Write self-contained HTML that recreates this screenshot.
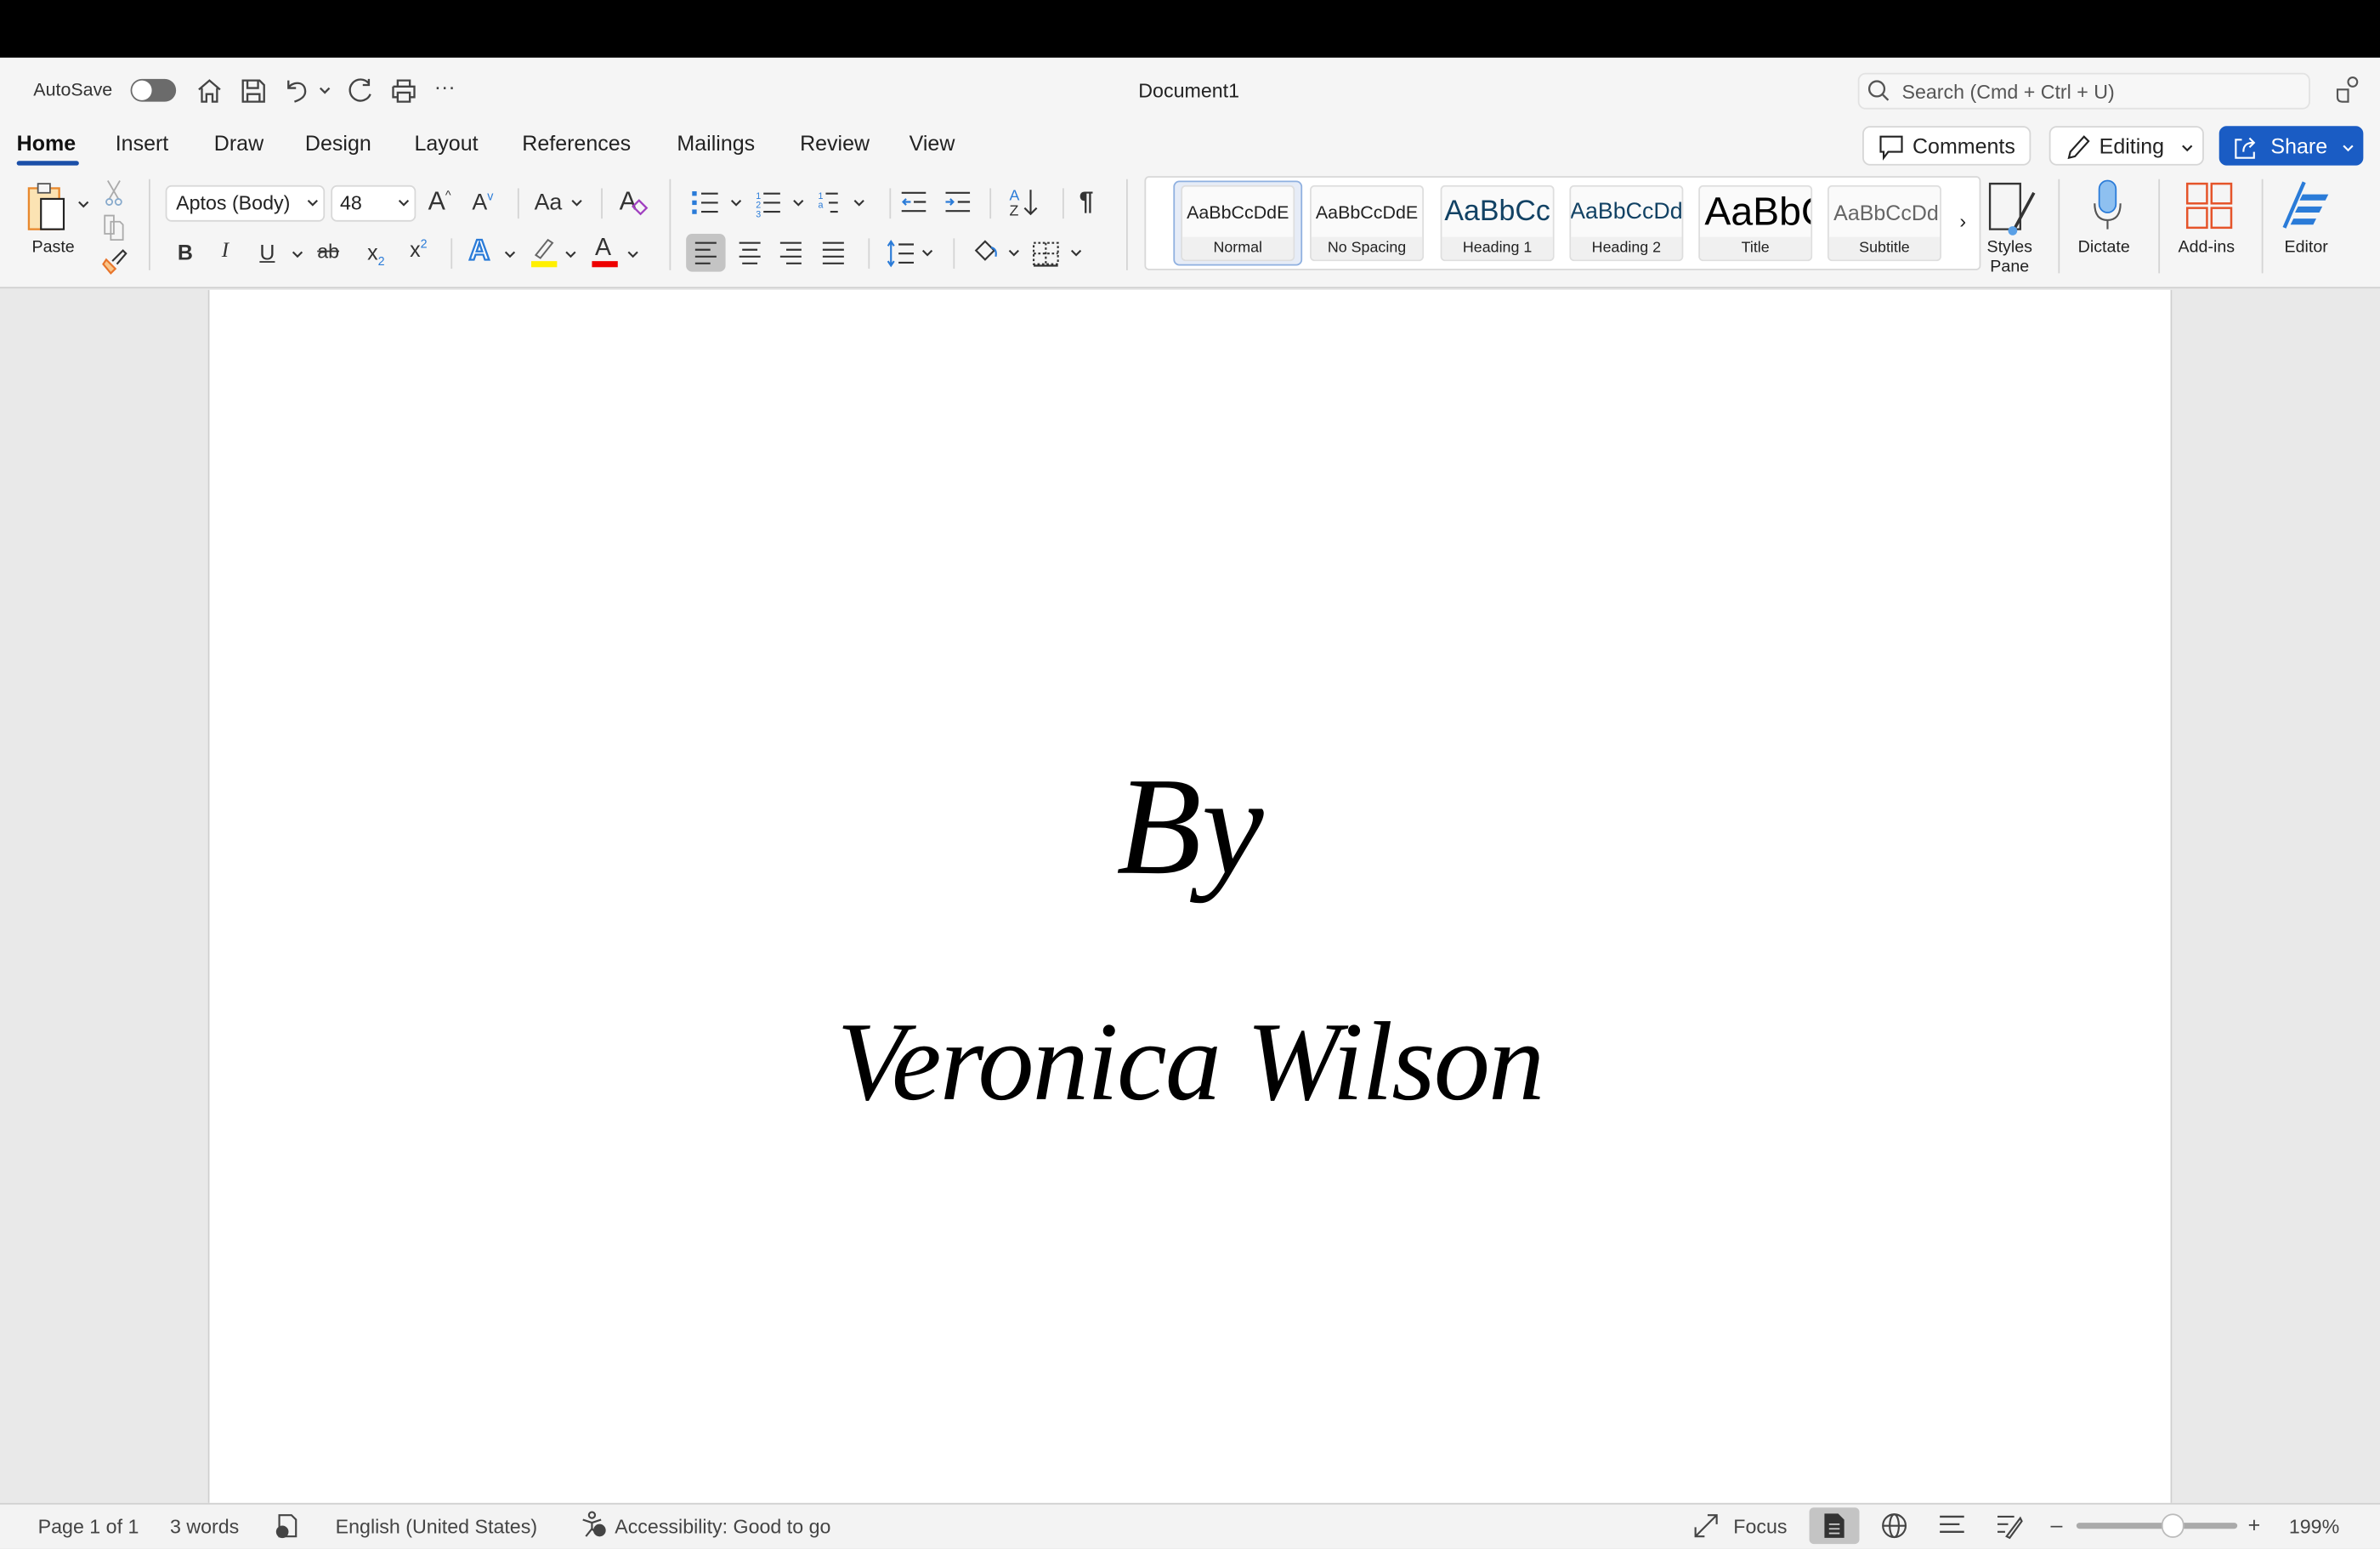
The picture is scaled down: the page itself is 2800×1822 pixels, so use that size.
<!DOCTYPE html>
<html><head><meta charset="utf-8">
<style>
*{margin:0;padding:0;box-sizing:border-box}
html,body{width:2800px;height:1822px;overflow:hidden;background:#e9e9e9}
#s{position:absolute;left:0;top:0;width:1568px;height:1020px;transform:scale(1.785714);transform-origin:0 0;font-family:"Liberation Sans",sans-serif;color:#222;background:#e9e9e9}
.a{position:absolute}
.t{font-size:14px;color:#222;white-space:nowrap}
.sep{position:absolute;width:1px;background:#d4d4d4}
svg{position:absolute;overflow:visible}
.btn{position:absolute;background:#fff;border:1px solid #d6d6d6;border-radius:5px;font-size:14px;display:flex;align-items:center}
.sty{position:absolute;top:122px;width:75px;height:50px;background:#fafafa;border:1px solid #dedede;border-radius:3px;overflow:hidden}
.sty .p{height:33px;display:flex;align-items:center;justify-content:center;white-space:nowrap;overflow:hidden}
.sty .l{height:17px;background:#f0f0f0;font-size:10px;text-align:center;line-height:16px;color:#222}
</style></head><body><div id="s">
<div class="a" style="left:0;top:0;width:1568px;height:38px;background:#000"></div>
<div class="a" style="left:0;top:38px;width:1568px;height:152px;background:#f5f5f5;border-bottom:1px solid #cfcfcf"></div>
<div class="a t" style="left:22px;top:52px;font-size:12px;color:#333">AutoSave</div>
<div class="a" style="left:86px;top:52px;width:30px;height:15px;border-radius:8px;background:#6b6b6b"></div>
<div class="a" style="left:87px;top:53px;width:13px;height:13px;border-radius:7px;background:#fff"></div>
<svg style="left:128px;top:50px" width="20" height="20" fill="none" stroke="#444" stroke-width="1.3"><path d="M3 9 L10 3 L17 9 M5 8 V17 H8 V12 H12 V17 H15 V8"/></svg>
<svg style="left:157px;top:50px" width="20" height="20" fill="none" stroke="#444" stroke-width="1.3"><path d="M3 3 H14 L17 6 V17 H3 Z M6 3 V8 H13 V3 M6 17 V12 H14 V17"/></svg>
<svg style="left:186px;top:50px" width="20" height="20" fill="none" stroke="#444" stroke-width="1.3"><path d="M4 3 V8 H9 M4 8 C6 4 14 3 15 9 C16 14 11 16 8 17"/></svg>
<svg style="left:210px;top:56px" width="10" height="8" fill="none" stroke="#444" stroke-width="1.3"><path d="M1 2 L4 5 L7 2"/></svg>
<svg style="left:228px;top:50px" width="20" height="20" fill="none" stroke="#444" stroke-width="1.3"><path d="M15 5 A7 7 0 1 0 16 12 M15 2 V6 H11"/></svg>
<svg style="left:256px;top:50px" width="20" height="20" fill="none" stroke="#444" stroke-width="1.3"><path d="M6 7 V3 H14 V7 M3 7 H17 V14 H14 M6 14 H3 V7 M6 11 H14 V17 H6 Z"/></svg>
<div class="a t" style="left:286px;top:49px;font-size:14px;color:#444">···</div>
<div class="a t" style="left:750px;top:52px;font-size:13px">Document1</div>
<div class="a" style="left:1224px;top:48px;width:298px;height:24px;border:1px solid #e2e2e2;border-radius:5px;background:#f7f7f7"></div>
<svg style="left:1230px;top:52px" width="16" height="16" fill="none" stroke="#555" stroke-width="1.3"><circle cx="6.5" cy="6.5" r="5"/><path d="M10 10 L14 14"/></svg>
<div class="a t" style="left:1253px;top:53px;font-size:13px;color:#555">Search (Cmd + Ctrl + U)</div>
<svg style="left:1538px;top:50px" width="18" height="18" fill="none" stroke="#555" stroke-width="1.2"><circle cx="12" cy="4" r="3"/><path d="M2 9 H9 V17 H5 Q2 17 2 14 Z"/></svg>
<div class="a t" style="left:11px;top:86px;font-size:14px;font-weight:bold;color:#111">Home</div>
<div class="a" style="left:11px;top:106px;width:41px;height:3px;border-radius:2px;background:#1b4fa8"></div>
<div class="a t" style="left:76px;top:86px">Insert</div>
<div class="a t" style="left:141px;top:86px">Draw</div>
<div class="a t" style="left:201px;top:86px">Design</div>
<div class="a t" style="left:273px;top:86px">Layout</div>
<div class="a t" style="left:344px;top:86px">References</div>
<div class="a t" style="left:446px;top:86px">Mailings</div>
<div class="a t" style="left:527px;top:86px">Review</div>
<div class="a t" style="left:599px;top:86px">View</div>
<div class="btn" style="left:1227px;top:83px;width:111px;height:26px"><svg style="left:9px;top:5px" width="18" height="16" fill="none" stroke="#222" stroke-width="1.2"><path d="M2 1 H16 V11 H7 L4 15 V11 H2 Z"/></svg><span style="margin-left:32px">Comments</span></div>
<div class="btn" style="left:1350px;top:83px;width:102px;height:26px"><svg style="left:9px;top:5px" width="18" height="16" fill="none" stroke="#222" stroke-width="1.2"><path d="M3 15 L4 11 L13 1 L16 4 L7 14 Z"/></svg><span style="margin-left:32px">Editing</span><svg style="left:86px;top:11px" width="10" height="8" fill="none" stroke="#222" stroke-width="1.2"><path d="M1 1 L4 4 L7 1"/></svg></div>
<div class="btn" style="left:1462px;top:83px;width:95px;height:26px;background:#1a5cc4;border-color:#1a5cc4;color:#fff"><svg style="left:8px;top:5px" width="18" height="16" fill="none" stroke="#fff" stroke-width="1.2"><path d="M6 3 H2 V15 H14 V11 M7 11 C7 6 10 5 14 5 M11 2 L14 5 L11 8"/></svg><span style="margin-left:33px">Share</span><svg style="left:80px;top:11px" width="10" height="8" fill="none" stroke="#fff" stroke-width="1.2"><path d="M1 1 L4 4 L7 1"/></svg></div>
<svg style="left:16px;top:120px" width="36" height="36"><rect x="3" y="4" width="20" height="27" fill="#fbe3b3" stroke="#e8892e" stroke-width="1.3"/><rect x="9" y="1" width="8" height="6" fill="#f5f5f5" stroke="#555" stroke-width="1"/><rect x="11" y="11" width="15" height="20" fill="#fff" stroke="#222" stroke-width="1.2"/></svg>
<svg style="left:51px;top:132px" width="8" height="6" fill="none" stroke="#333" stroke-width="1.2"><path d="M1 1 L4 4 L7 1"/></svg>
<div class="a t" style="left:21px;top:157px;font-size:11px">Paste</div>
<svg style="left:68px;top:118px" width="14" height="18" fill="none" stroke="#9db" stroke-width="1"><path d="M3 1 L10 13 M11 1 L4 13" stroke="#aaa"/><circle cx="4" cy="15" r="2" stroke="#8ac"/><circle cx="10" cy="15" r="2" stroke="#8ac"/></svg>
<svg style="left:67px;top:141px" width="16" height="18" fill="none" stroke="#aaa" stroke-width="1"><path d="M2 1 H8 V13 H2 Z M6 5 H12 L14 7 V17 H6 Z"/></svg>
<svg style="left:67px;top:163px" width="18" height="18" fill="none" stroke-width="1.2"><path d="M3 8 L9 14 L6 17 L1 11 Z" fill="#f9c58a" stroke="#e8742a"/><path d="M7 9 L14 2 L16 4 L10 11" stroke="#333"/></svg>
<div class="sep" style="left:98px;top:118px;height:60px"></div>
<div class="a" style="left:109px;top:122px;width:105px;height:24px;background:#fff;border:1px solid #d8d8d8;border-radius:4px"></div>
<div class="a t" style="left:116px;top:126px;font-size:13px">Aptos (Body)</div>
<svg style="left:202px;top:131px" width="8" height="6" fill="none" stroke="#333" stroke-width="1.2"><path d="M1 1 L4 4 L7 1"/></svg>
<div class="a" style="left:218px;top:122px;width:56px;height:24px;background:#fff;border:1px solid #d8d8d8;border-radius:4px"></div>
<div class="a t" style="left:224px;top:126px;font-size:13px">48</div>
<svg style="left:262px;top:131px" width="8" height="6" fill="none" stroke="#333" stroke-width="1.2"><path d="M1 1 L4 4 L7 1"/></svg>
<div class="a t" style="left:282px;top:123px;font-size:17px;color:#333">A<sup style="font-size:8px">^</sup></div>
<div class="a t" style="left:311px;top:125px;font-size:15px;color:#333">A<sup style="font-size:8px;color:#2a7bd8">v</sup></div>
<div class="sep" style="left:341px;top:124px;height:20px"></div>
<div class="a t" style="left:352px;top:125px;font-size:15px;color:#333">Aa</div>
<svg style="left:376px;top:131px" width="8" height="6" fill="none" stroke="#333" stroke-width="1.2"><path d="M1 1 L4 4 L7 1"/></svg>
<div class="sep" style="left:396px;top:124px;height:20px"></div>
<div class="a t" style="left:408px;top:123px;font-size:17px;color:#333">A</div>
<svg style="left:416px;top:131px" width="12" height="12" fill="none" stroke="#a040c0" stroke-width="1.3"><path d="M5 1 L10 6 L6 10 L1 5 Z"/></svg>
<div class="a t" style="left:117px;top:158px;font-size:14px;font-weight:bold;color:#333">B</div>
<div class="a t" style="left:146px;top:158px;font-size:14px;font-style:italic;font-family:'Liberation Serif';color:#333">I</div>
<div class="a t" style="left:171px;top:158px;font-size:14px;text-decoration:underline;color:#333">U</div>
<svg style="left:192px;top:165px" width="8" height="6" fill="none" stroke="#333" stroke-width="1.2"><path d="M1 1 L4 4 L7 1"/></svg>
<div class="a t" style="left:209px;top:158px;font-size:13px;text-decoration:line-through;color:#333">ab</div>
<div class="a t" style="left:242px;top:158px;font-size:14px;color:#333">x<sub style="font-size:8px;color:#2a7bd8">2</sub></div>
<div class="a t" style="left:270px;top:156px;font-size:14px;color:#333">x<sup style="font-size:8px;color:#2a7bd8">2</sup></div>
<div class="sep" style="left:297px;top:157px;height:20px"></div>
<div class="a t" style="left:309px;top:155px;font-size:19px;font-weight:bold;color:#fff;-webkit-text-stroke:1.3px #2a7bd8">A</div>
<svg style="left:332px;top:165px" width="8" height="6" fill="none" stroke="#333" stroke-width="1.2"><path d="M1 1 L4 4 L7 1"/></svg>
<svg style="left:350px;top:156px" width="16" height="20"><path d="M3 12 L11 2 L14 4 L6 14 Z" fill="none" stroke="#666" stroke-width="1.1"/><rect x="0" y="16" width="17" height="4" fill="#fff000"/></svg>
<svg style="left:372px;top:165px" width="8" height="6" fill="none" stroke="#333" stroke-width="1.2"><path d="M1 1 L4 4 L7 1"/></svg>
<div class="a t" style="left:392px;top:155px;font-size:16px;color:#333">A</div>
<div class="a" style="left:390px;top:172px;width:17px;height:4px;background:#e00"></div>
<svg style="left:413px;top:165px" width="8" height="6" fill="none" stroke="#333" stroke-width="1.2"><path d="M1 1 L4 4 L7 1"/></svg>
<div class="sep" style="left:441px;top:118px;height:60px"></div>
<svg style="left:456px;top:125px" width="120" height="18" stroke="#333" stroke-width="1.2" fill="none">
<rect x="0" y="1" width="3" height="3" fill="#2a7bd8" stroke="none"/><rect x="0" y="7" width="3" height="3" fill="#2a7bd8" stroke="none"/><rect x="0" y="13" width="3" height="3" fill="#2a7bd8" stroke="none"/>
<path d="M6 2.5 H17 M6 8.5 H17 M6 14.5 H17"/><path d="M26 7 L29 10 L32 7"/>
<text x="42" y="6" font-size="6" fill="#2a7bd8" stroke="none" font-family="Liberation Sans">1</text><text x="42" y="12" font-size="6" fill="#2a7bd8" stroke="none" font-family="Liberation Sans">2</text><text x="42" y="18" font-size="6" fill="#2a7bd8" stroke="none" font-family="Liberation Sans">3</text>
<path d="M47 2.5 H58 M47 8.5 H58 M47 14.5 H58"/><path d="M67 7 L70 10 L73 7"/>
<text x="83" y="6" font-size="6" fill="#2a7bd8" stroke="none" font-family="Liberation Sans">1</text><text x="83" y="12" font-size="6" fill="#2a7bd8" stroke="none" font-family="Liberation Sans">a</text>
<path d="M88 2.5 H96 M90 8.5 H96 M91 14.5 H96"/><path d="M107 7 L110 10 L113 7"/></svg>
<div class="sep" style="left:586px;top:124px;height:20px"></div>
<svg style="left:594px;top:125px" width="46" height="18" stroke="#333" stroke-width="1.2" fill="none"><path d="M0 2 H16 M8 8 H16 M0 14 H16"/><path d="M6 8 H1 M3 6 L1 8 L3 10" stroke="#2a7bd8"/><path d="M29 2 H45 M37 8 H45 M29 14 H45"/><path d="M29 8 H34 M32 6 L34 8 L32 10" stroke="#2a7bd8"/></svg>
<div class="sep" style="left:652px;top:124px;height:20px"></div>
<svg style="left:664px;top:122px" width="22" height="22" fill="none" stroke-width="1.2"><text x="1" y="10" font-size="10" fill="#2a7bd8" font-family="Liberation Sans">A</text><text x="1" y="20" font-size="10" fill="#333" font-family="Liberation Sans">Z</text><path d="M15 3 V19 M11 15 L15 19 L19 15" stroke="#333"/></svg>
<div class="sep" style="left:700px;top:124px;height:20px"></div>
<div class="a t" style="left:711px;top:123px;font-size:17px;font-weight:bold;color:#333">¶</div>
<div class="a" style="left:452px;top:154px;width:26px;height:25px;background:#c4c4c4;border-radius:4px"></div>
<svg style="left:456px;top:158px" width="100" height="18" stroke="#333" stroke-width="1.2" fill="none"><path d="M2 2 H16 M2 6.5 H12 M2 11 H16 M2 15.5 H12"/><path d="M31 2 H45 M33 6.5 H43 M31 11 H45 M33 15.5 H43"/><path d="M58 2 H72 M62 6.5 H72 M58 11 H72 M62 15.5 H72"/><path d="M86 2 H100 M86 6.5 H100 M86 11 H100 M86 15.5 H100"/></svg>
<div class="sep" style="left:572px;top:157px;height:20px"></div>
<svg style="left:584px;top:158px" width="34" height="18" stroke="#333" stroke-width="1.2" fill="none"><path d="M3 1 V17 M1 4 L3 1 L5 4 M1 14 L3 17 L5 14" stroke="#2a7bd8"/><path d="M8 3 H18 M8 9 H18 M8 15 H18"/><path d="M24 7 L27 10 L30 7"/></svg>
<div class="sep" style="left:628px;top:157px;height:20px"></div>
<svg style="left:641px;top:157px" width="76" height="20" stroke="#333" stroke-width="1.2" fill="none"><path d="M2 8 L8 2 L14 8 L8 14 Z"/><path d="M12 6 Q16 7 15 12" stroke="#2a7bd8"/><path d="M24 8 L27 11 L30 8"/><path d="M40 3 H56 V17 H40 Z M48 3 V17 M40 10 H56" stroke-dasharray="1.5 1.5"/><path d="M40 18 H56"/><path d="M65 8 L68 11 L71 8"/></svg>
<div class="sep" style="left:742px;top:118px;height:60px"></div>
<div class="a" style="left:754px;top:116px;width:551px;height:62px;background:#fff;border:1px solid #d8d8d8;border-radius:3px"></div>
<div class="a" style="left:773px;top:119px;width:85px;height:56px;border:1.5px solid #8fb0e0;border-radius:4px;background:#e6ecf7"></div>
<div class="sty" style="left:778px"><div class="p" style="font-size:12px">AaBbCcDdE</div><div class="l">Normal</div></div>
<div class="sty" style="left:863px"><div class="p" style="font-size:12px">AaBbCcDdE</div><div class="l">No Spacing</div></div>
<div class="sty" style="left:949px"><div class="p" style="font-size:19px;color:#124264">AaBbCc</div><div class="l">Heading 1</div></div>
<div class="sty" style="left:1034px"><div class="p" style="font-size:15px;color:#124264">AaBbCcDd</div><div class="l">Heading 2</div></div>
<div class="sty" style="left:1119px"><div class="p" style="font-size:26px;color:#000;justify-content:flex-start;padding-left:3px">AaBbC</div><div class="l">Title</div></div>
<div class="sty" style="left:1204px"><div class="p" style="font-size:14px;color:#666;justify-content:flex-start;padding-left:3px">AaBbCcDd</div><div class="l">Subtitle</div></div>
<div class="a t" style="left:1291px;top:138px;font-size:13px">›</div>
<svg style="left:1309px;top:119px" width="36" height="40" fill="none" stroke-width="1.3"><path d="M2 2 H22 V32 H2 Z" stroke="#333"/><path d="M31 8 L18 32" stroke="#333" stroke-width="2"/><circle cx="17" cy="33" r="3" fill="#5aa0e6" stroke="none"/></svg>
<div class="a t" style="left:1309px;top:157px;font-size:11px;text-align:center;line-height:13px">Styles<br>Pane</div>
<div class="sep" style="left:1356px;top:118px;height:62px"></div>
<svg style="left:1376px;top:118px" width="26" height="36"><rect x="7" y="1" width="11" height="21" rx="5.5" fill="#8ec0f0" stroke="#2a7bd8" stroke-width="1"/><path d="M4 16 Q4 27 12.5 27 Q21 27 21 16 M12.5 27 V33" fill="none" stroke="#555" stroke-width="1.2"/></svg>
<div class="a t" style="left:1369px;top:157px;font-size:11px">Dictate</div>
<div class="sep" style="left:1422px;top:118px;height:62px"></div>
<svg style="left:1440px;top:120px" width="32" height="32" fill="none" stroke="#e5542a" stroke-width="1.4"><rect x="1" y="1" width="13" height="13"/><rect x="17" y="1" width="13" height="13"/><rect x="1" y="17" width="13" height="13"/><rect x="17" y="17" width="13" height="13"/></svg>
<div class="a t" style="left:1435px;top:157px;font-size:11px">Add-ins</div>
<div class="sep" style="left:1490px;top:118px;height:62px"></div>
<svg style="left:1502px;top:118px" width="40" height="36"><path d="M16 2 L3 32" stroke="#2a7bd8" stroke-width="2.4" fill="none"/><path d="M15 10 H32 L30 14 H13 Z M12 18 H28 L26 22 H10 Z M9 26 H24 L22 30 H7 Z" fill="#2a7bd8"/></svg>
<div class="a t" style="left:1505px;top:157px;font-size:11px">Editor</div>
<div class="a" style="left:0;top:191px;width:1568px;height:799px;background:#e9e9e9"></div>
<div class="a" style="left:137px;top:191px;width:1294px;height:799px;background:#fff;border-left:1px solid #cfcfcf;border-right:1px solid #cfcfcf"></div>
<div class="a" style="left:0;top:494px;width:1568px;text-align:center;font-family:'Liberation Serif',serif;font-style:italic;font-size:92px;line-height:100px;color:#000">By</div>
<div class="a" style="left:0;top:650px;width:1568px;text-align:center;font-family:'Liberation Serif',serif;font-style:italic;font-size:74px;line-height:100px;color:#000;letter-spacing:-1px">Veronica Wilson</div>
<div class="a" style="left:0;top:990px;width:1568px;height:30px;background:#f3f3f3;border-top:1px solid #d0d0d0"></div>
<div class="a t" style="left:25px;top:998px;font-size:13px;color:#444">Page 1 of 1</div>
<div class="a t" style="left:112px;top:998px;font-size:13px;color:#444">3 words</div>
<svg style="left:180px;top:996px" width="18" height="18" fill="none" stroke="#444" stroke-width="1.2"><path d="M4 2 H12 L15 5 V16 H4 Z"/><circle cx="6" cy="13" r="3.5" fill="#444"/></svg>
<div class="a t" style="left:221px;top:998px;font-size:13px;color:#444">English (United States)</div>
<svg style="left:382px;top:995px" width="18" height="18" fill="none" stroke="#444" stroke-width="1.2"><circle cx="8" cy="3" r="2"/><path d="M2 6 L8 8 L14 6 M8 8 V12 L4 17 M8 12 L10 14"/><circle cx="13" cy="13" r="3.5" fill="#444"/></svg>
<div class="a t" style="left:405px;top:998px;font-size:13px;color:#444">Accessibility: Good to go</div>
<svg style="left:1115px;top:996px" width="18" height="18" fill="none" stroke="#444" stroke-width="1.2"><path d="M2 16 L16 2 M10 2 H16 V8 M2 10 V16 H8"/></svg>
<div class="a t" style="left:1142px;top:998px;font-size:13px;color:#444">Focus</div>
<div class="a" style="left:1192px;top:993px;width:33px;height:24px;background:#c4c4c4;border-radius:3px"></div>
<svg style="left:1201px;top:996px" width="16" height="18"><path d="M1 1 H10 L14 5 V17 H1 Z" fill="#333"/><path d="M4 8 H11 M4 11 H11 M4 14 H11" stroke="#ccc" stroke-width="1"/></svg>
<svg style="left:1239px;top:996px" width="18" height="18" fill="none" stroke="#444" stroke-width="1.2"><circle cx="9" cy="9" r="7.5"/><ellipse cx="9" cy="9" rx="3" ry="7.5"/><path d="M1.5 9 H16.5"/></svg>
<svg style="left:1277px;top:997px" width="18" height="16" stroke="#444" stroke-width="1.3"><path d="M1 2 H17 M1 7 H14 M1 12 H17"/></svg>
<svg style="left:1315px;top:996px" width="18" height="18" fill="none" stroke="#444" stroke-width="1.2"><path d="M1 3 H12 M1 8 H8 M1 13 H6 M7 16 L16 4 L17 6 L9 17 Z"/></svg>
<div class="a t" style="left:1351px;top:996px;font-size:14px;color:#444">–</div>
<div class="a" style="left:1368px;top:1003px;width:106px;height:4px;background:#aaa;border-radius:2px"></div>
<div class="a" style="left:1424px;top:997px;width:15px;height:16px;border-radius:8px;background:#fff;border:1px solid #bbb"></div>
<div class="a t" style="left:1481px;top:996px;font-size:14px;color:#444">+</div>
<div class="a t" style="left:1508px;top:998px;font-size:13px;color:#444">199%</div>
</div></body></html>
